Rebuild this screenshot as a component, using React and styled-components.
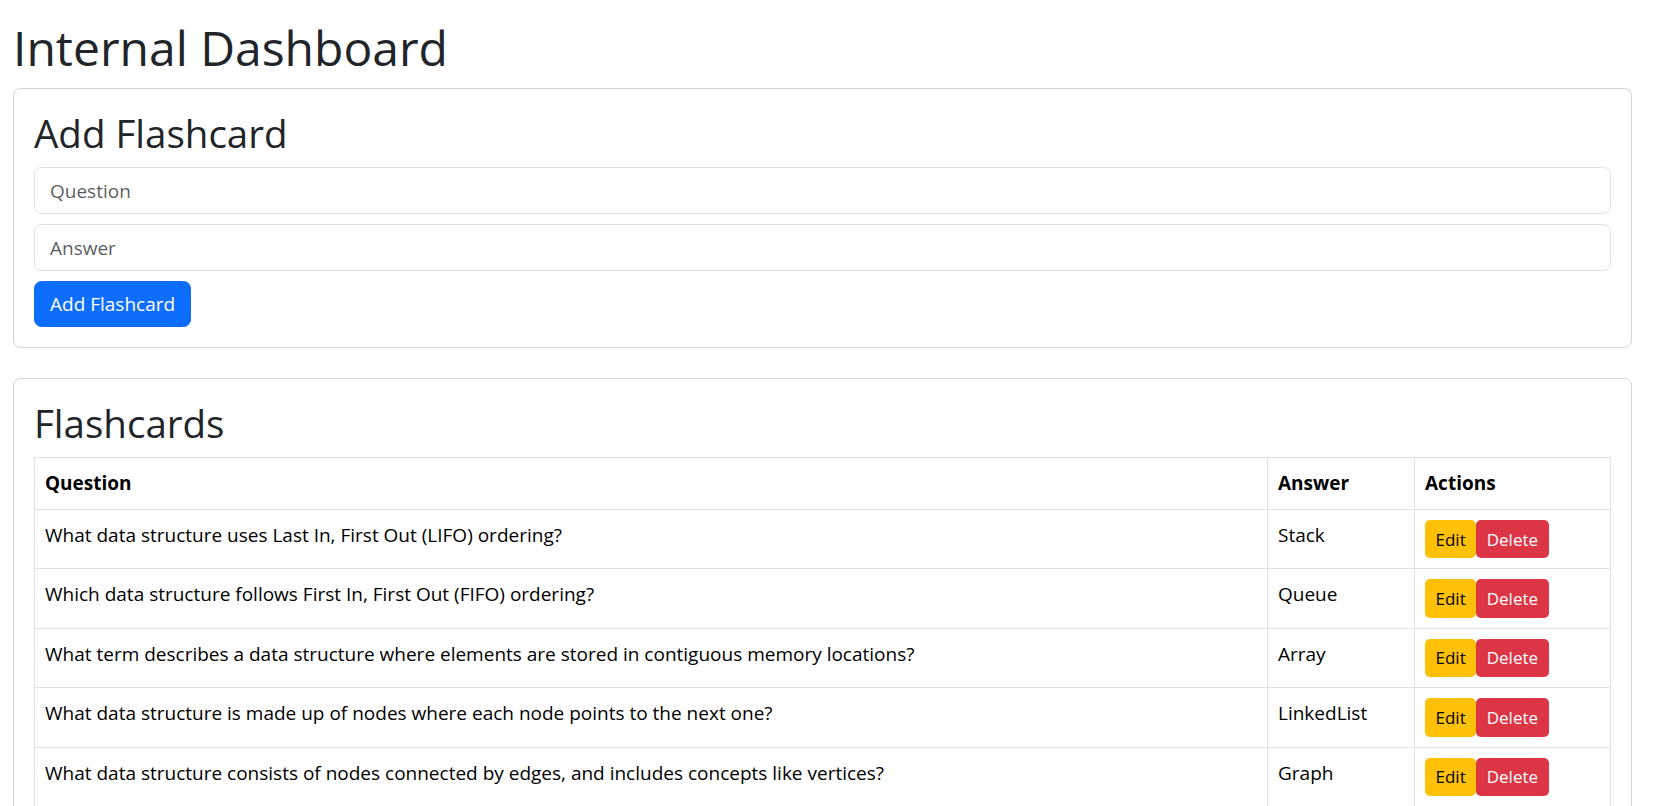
import React from 'react'
import styled, { createGlobalStyle } from 'styled-components'

const GlobalStyle = createGlobalStyle`
    html, body {
        margin: 0;
        overflow: hidden;
        background: #fff;
    }
    body {
        font-family: "Segoe UI", "Open Sans", "Noto Sans", sans-serif;
        color: #212529;
    }
`

const cards = [
    { question: 'What data structure uses Last In, First Out (LIFO) ordering?', answer: 'Stack' },
    { question: 'Which data structure follows First In, First Out (FIFO) ordering?', answer: 'Queue' },
    { question: 'What term describes a data structure where elements are stored in contiguous memory locations?', answer: 'Array' },
    { question: 'What data structure is made up of nodes where each node points to the next one?', answer: 'LinkedList' },
    { question: 'What data structure consists of nodes connected by edges, and includes concepts like vertices?', answer: 'Graph' },
    { question: 'What hierarchical data structure has a root node and child nodes?', answer: 'Tree' },
]

function App() {
    return (
        <Page>
            <GlobalStyle />
            <Title>Internal Dashboard</Title>

            <Card>
                <CardTitle>Add Flashcard</CardTitle>
                <Input placeholder="Question" />
                <Input placeholder="Answer" />
                <PrimaryButton>Add Flashcard</PrimaryButton>
            </Card>

            <Card>
                <CardTitle>Flashcards</CardTitle>
                <Table>
                    <colgroup>
                        <col />
                        <col style={{ width: 147 }} />
                        <col style={{ width: 196 }} />
                    </colgroup>
                    <thead>
                        <tr>
                            <Th>Question</Th>
                            <Th>Answer</Th>
                            <Th>Actions</Th>
                        </tr>
                    </thead>
                    <tbody>
                        {cards.map((card) => (
                            <tr key={card.answer}>
                                <Td>{card.question}</Td>
                                <Td>{card.answer}</Td>
                                <Td>
                                    <Actions>
                                        <SmallButton variant="warning">Edit</SmallButton>
                                        <SmallButton variant="danger">Delete</SmallButton>
                                    </Actions>
                                </Td>
                            </tr>
                        ))}
                    </tbody>
                </Table>
            </Card>
        </Page>
    )
}

export default App

const Page = styled.div`
    padding: 18px 29px 0 13px;
`
const Title = styled.h1`
    margin: 0 0 10px;
    font-size: 48px;
    line-height: 60px;
    font-weight: 400;
`
const Card = styled.div`
    display: flex;
    flex-direction: column;
    align-items: flex-start;
    border: 1px solid #d3d3d4;
    border-radius: 7.5px;
    padding: 20px;
    margin-bottom: 30px;
`
const CardTitle = styled.h2`
    margin: 0 0 10px;
    font-size: 38.5px;
    line-height: 48px;
    font-weight: 400;
`
const Input = styled.input`
    box-sizing: border-box;
    width: 100%;
    height: 47px;
    margin-bottom: 10px;
    padding: 0 15px;
    border: 1px solid #dee2e6;
    border-radius: 7.5px;
    font-family: inherit;
    font-size: 19px;
    color: #212529;
    outline: none;
    &::placeholder {
        color: rgba(33, 37, 41, 0.75);
    }
`
const PrimaryButton = styled.button`
    height: 46px;
    padding: 0 15px;
    border: 1px solid #0d6efd;
    border-radius: 7.5px;
    background: #0d6efd;
    color: #fff;
    font-family: inherit;
    font-size: 19px;
`
const Table = styled.table`
    width: 100%;
    border-collapse: collapse;
    table-layout: fixed;
    color: #000;
`
const Th = styled.th`
    border: 1px solid #dee2e6;
    padding: 10px;
    text-align: left;
    vertical-align: top;
    font-size: 19px;
    line-height: 31px;
    font-weight: 700;
`
const Td = styled.td`
    border: 1px solid #dee2e6;
    padding: 10px;
    vertical-align: top;
    font-size: 19px;
    line-height: 30px;
`
const Actions = styled.div`
    display: flex;
`
const SmallButton = styled.button`
    height: 38.4px;
    padding: 0 10.5px;
    border: none;
    border-radius: 5px;
    font-family: inherit;
    font-size: 17px;
    background: ${(p) => (p.variant === 'danger' ? '#dc3545' : '#ffc107')};
    color: ${(p) => (p.variant === 'danger' ? '#fff' : '#000')};
`
